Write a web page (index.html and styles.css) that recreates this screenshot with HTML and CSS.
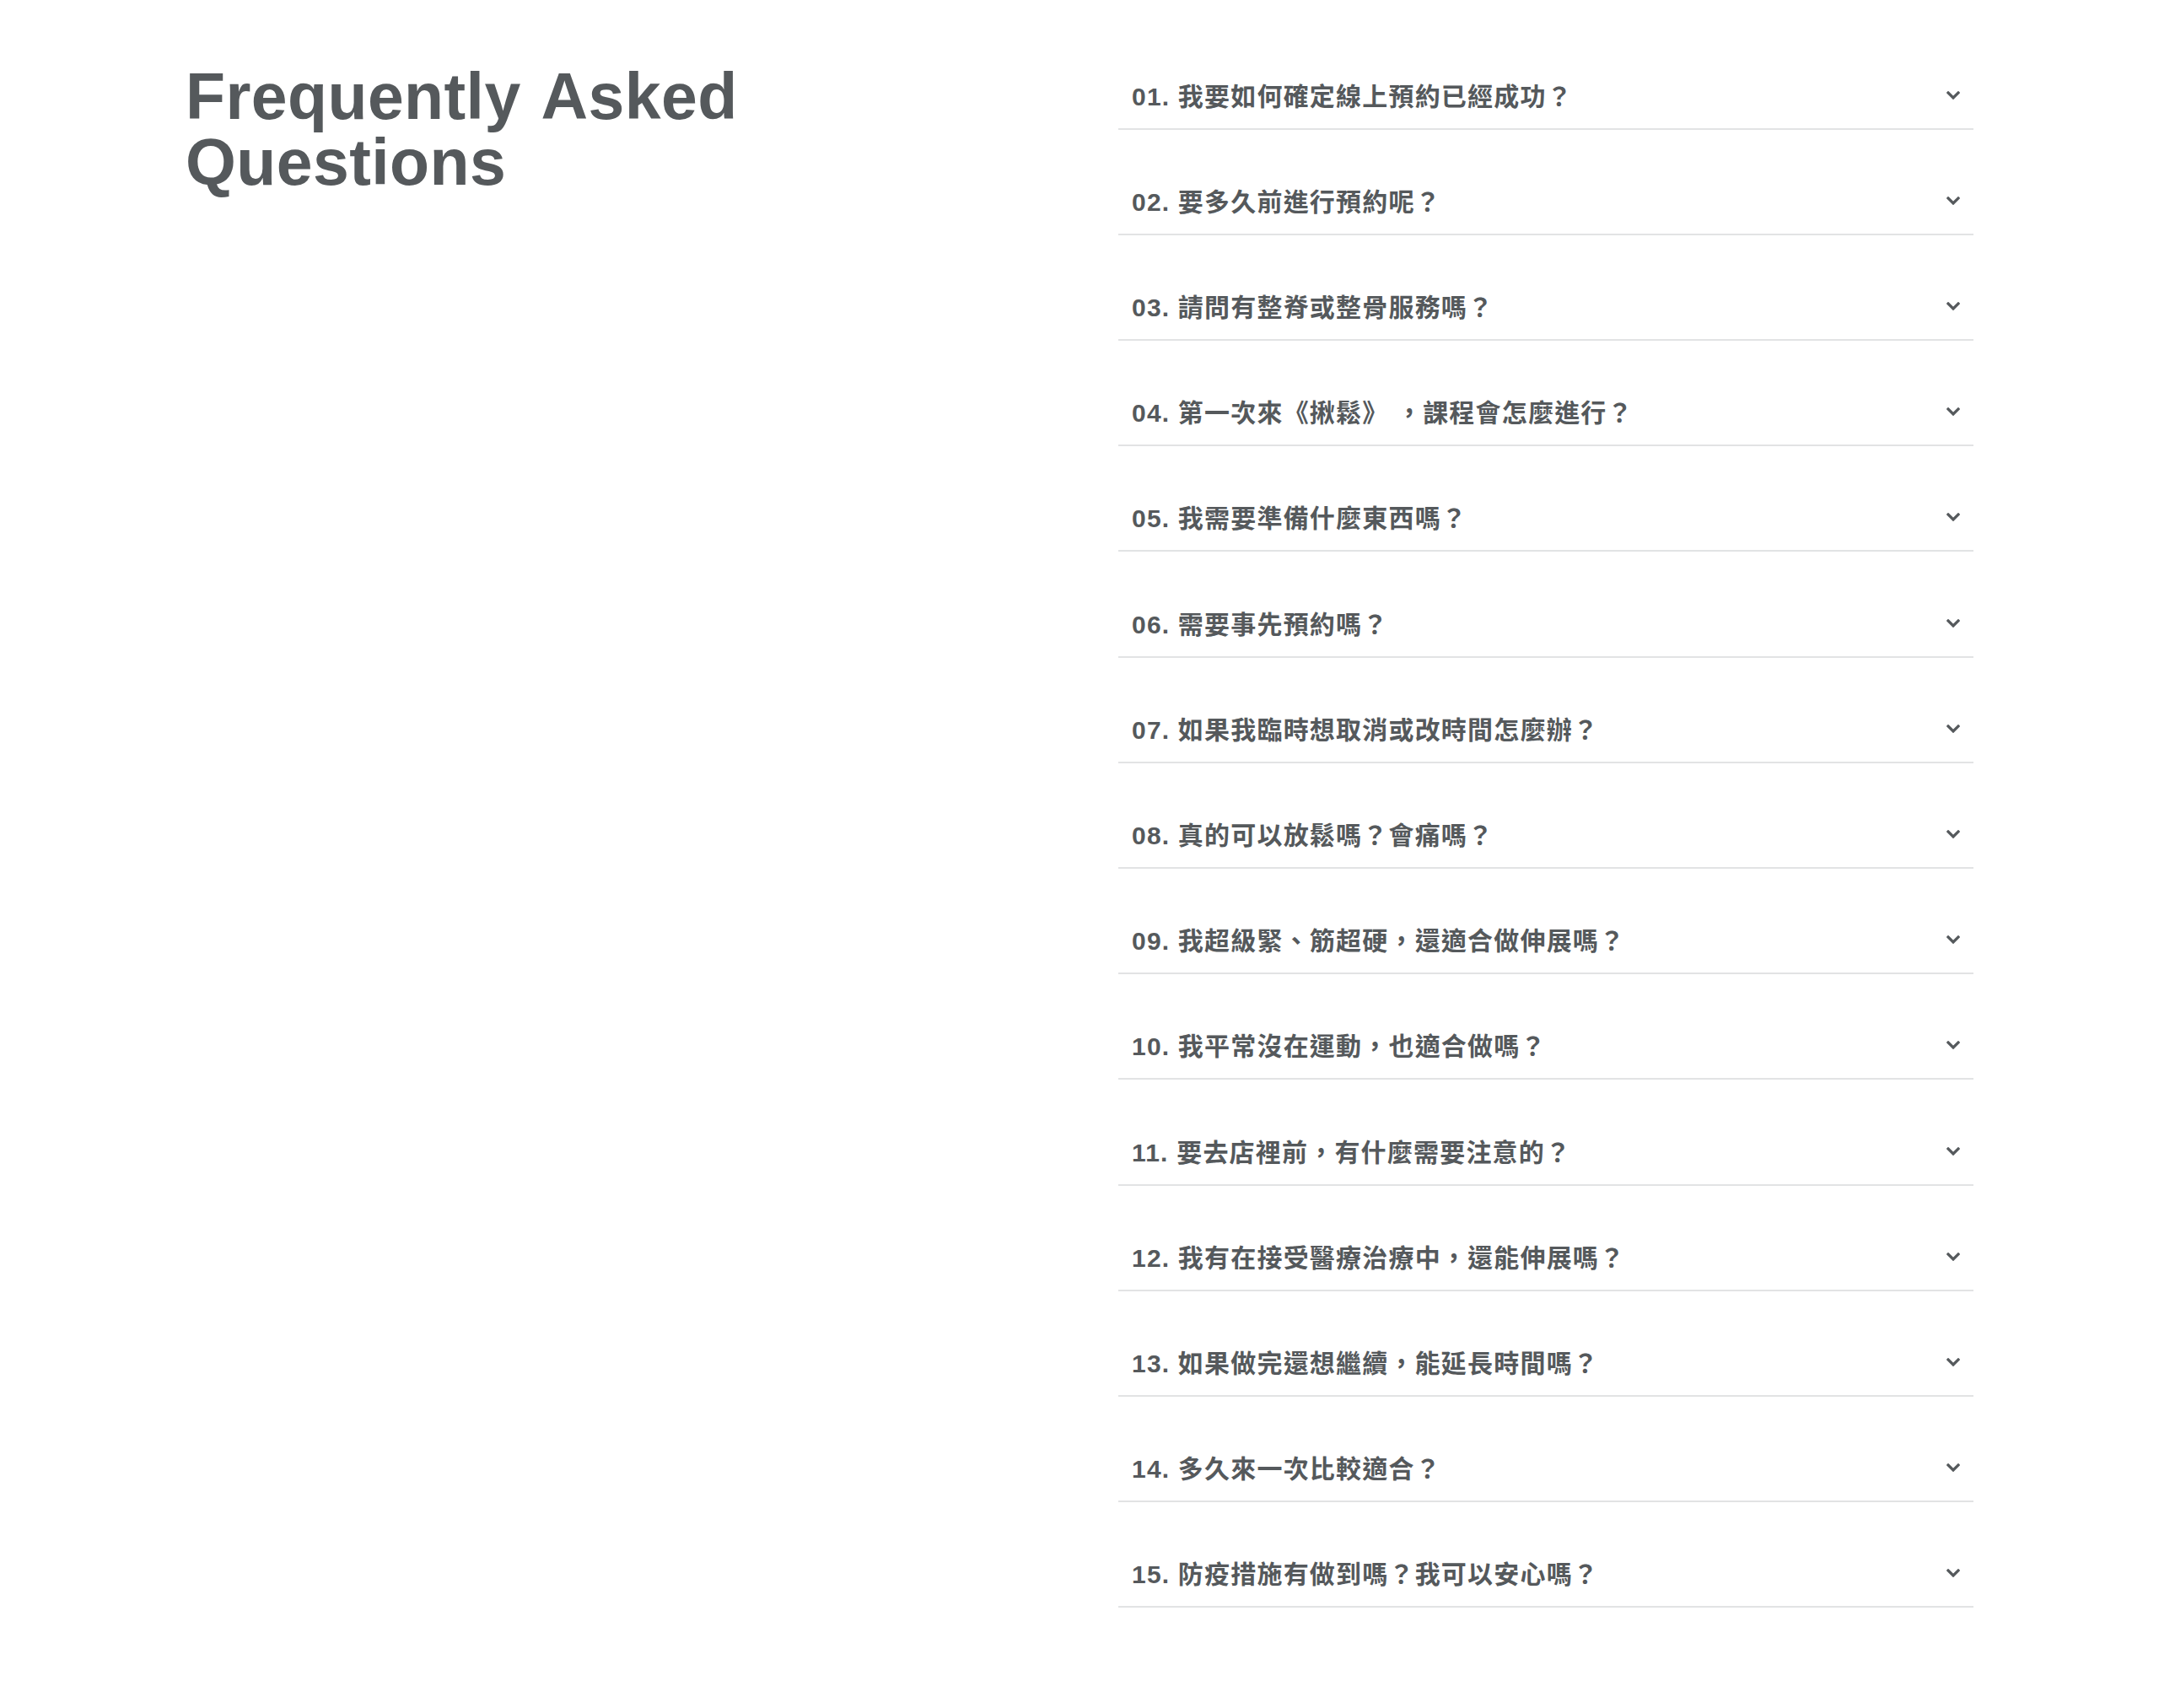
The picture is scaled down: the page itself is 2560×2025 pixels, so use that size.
FILE: index.html
```html
<!DOCTYPE html>
<html lang="zh-Hant">
<head>
<meta charset="utf-8">
<title>Frequently Asked Questions</title>
<link rel="stylesheet" href="styles.css">
</head>
<body>
<main class="faq">
  <h1 class="faq-title">Frequently Asked<br>Questions</h1>
  <ul class="faq-list">
    <li class="faq-item"><span class="faq-q">01. 我要如何確定線上預約已經成功？</span><svg class="chev" viewBox="0 0 16 10"><path d="M2 2 L8 8 L14 2"/></svg></li>
    <li class="faq-item"><span class="faq-q">02. 要多久前進行預約呢？</span><svg class="chev" viewBox="0 0 16 10"><path d="M2 2 L8 8 L14 2"/></svg></li>
    <li class="faq-item"><span class="faq-q">03. 請問有整脊或整骨服務嗎？</span><svg class="chev" viewBox="0 0 16 10"><path d="M2 2 L8 8 L14 2"/></svg></li>
    <li class="faq-item"><span class="faq-q">04. 第一次來《揪鬆》 ，課程會怎麼進行？</span><svg class="chev" viewBox="0 0 16 10"><path d="M2 2 L8 8 L14 2"/></svg></li>
    <li class="faq-item"><span class="faq-q">05. 我需要準備什麼東西嗎？</span><svg class="chev" viewBox="0 0 16 10"><path d="M2 2 L8 8 L14 2"/></svg></li>
    <li class="faq-item"><span class="faq-q">06. 需要事先預約嗎？</span><svg class="chev" viewBox="0 0 16 10"><path d="M2 2 L8 8 L14 2"/></svg></li>
    <li class="faq-item"><span class="faq-q">07. 如果我臨時想取消或改時間怎麼辦？</span><svg class="chev" viewBox="0 0 16 10"><path d="M2 2 L8 8 L14 2"/></svg></li>
    <li class="faq-item"><span class="faq-q">08. 真的可以放鬆嗎？會痛嗎？</span><svg class="chev" viewBox="0 0 16 10"><path d="M2 2 L8 8 L14 2"/></svg></li>
    <li class="faq-item"><span class="faq-q">09. 我超級緊、筋超硬，還適合做伸展嗎？</span><svg class="chev" viewBox="0 0 16 10"><path d="M2 2 L8 8 L14 2"/></svg></li>
    <li class="faq-item"><span class="faq-q">10. 我平常沒在運動，也適合做嗎？</span><svg class="chev" viewBox="0 0 16 10"><path d="M2 2 L8 8 L14 2"/></svg></li>
    <li class="faq-item"><span class="faq-q">11. 要去店裡前，有什麼需要注意的？</span><svg class="chev" viewBox="0 0 16 10"><path d="M2 2 L8 8 L14 2"/></svg></li>
    <li class="faq-item"><span class="faq-q">12. 我有在接受醫療治療中，還能伸展嗎？</span><svg class="chev" viewBox="0 0 16 10"><path d="M2 2 L8 8 L14 2"/></svg></li>
    <li class="faq-item"><span class="faq-q">13. 如果做完還想繼續，能延長時間嗎？</span><svg class="chev" viewBox="0 0 16 10"><path d="M2 2 L8 8 L14 2"/></svg></li>
    <li class="faq-item"><span class="faq-q">14. 多久來一次比較適合？</span><svg class="chev" viewBox="0 0 16 10"><path d="M2 2 L8 8 L14 2"/></svg></li>
    <li class="faq-item"><span class="faq-q">15. 防疫措施有做到嗎？我可以安心嗎？</span><svg class="chev" viewBox="0 0 16 10"><path d="M2 2 L8 8 L14 2"/></svg></li>
  </ul>
</main>
</body>
</html>
```

FILE: styles.css
```css
html, body {
  margin: 0;
  padding: 0;
  background: #ffffff;
}

.faq {
  display: grid;
  grid-template-columns: 1fr 1014px;
  align-items: start;
  padding: 28.5px 220px 80px 220px;
  color: #55595c;
  font-family: "Liberation Sans", "Noto Sans CJK TC", sans-serif;
}

.faq-title {
  margin: 46.5px 0 0 0;
  font-size: 77px;
  line-height: 78px;
  font-weight: 700;
  letter-spacing: 0.4px;
  word-spacing: 5px;
  color: #55595c;
}

.faq-list {
  list-style: none;
  margin: 0;
  padding: 0;
}

.faq-item {
  display: flex;
  align-items: center;
  justify-content: space-between;
  padding: 66.2px 16px 17px 16px;
  border-bottom: 2px solid #e2e3e4;
}

.faq-q {
  font-size: 30px;
  line-height: 40px;
  font-weight: 600;
  letter-spacing: 1.2px;
  color: #55595c;
}

.chev {
  width: 16px;
  height: 10px;
  margin-top: -4px;
  fill: none;
  stroke: #55595c;
  stroke-width: 3.2;
  stroke-linecap: square;
  stroke-linejoin: miter;
}
```
